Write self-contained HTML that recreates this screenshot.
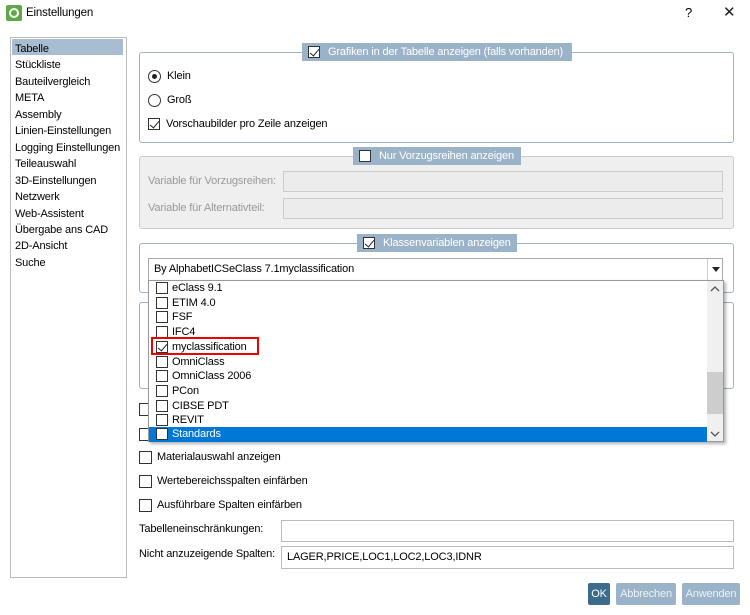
<!DOCTYPE html>
<html><head><meta charset="utf-8"><style>
*{box-sizing:border-box;margin:0;padding:0}
body{width:750px;height:615px;background:#fff;font-family:"Liberation Sans",sans-serif;font-size:11px;letter-spacing:-0.15px;color:#000;position:relative;overflow:hidden}
.a{position:absolute;white-space:nowrap}
span{white-space:nowrap}
.cb{position:absolute;width:13px;height:13px;border:1px solid #333;background:#fff}
.ck::after{content:"";position:absolute;left:3px;top:0px;width:4px;height:8px;border:solid #222;border-width:0 1.3px 1.3px 0;transform:rotate(40deg)}
.grp{position:absolute;border:1px solid #9cb3c8;border-radius:3px}
.hdr{position:absolute;background:#9bb3c9;color:#fff;height:18px;line-height:18px}
.inp{position:absolute;border:1px solid #bbb;background:#fff}
.row{position:absolute;left:0;height:15px;line-height:15px;width:558px}
.row .cb{left:7px;top:1px;width:12px;height:12px}
.row span{position:absolute;left:23px;top:0}
.btn{position:absolute;height:22px;line-height:22px;text-align:center;border-radius:2px;color:#eef3f7;background:#9ab3c8}
</style></head><body>
<div class="a" style="left:6px;top:5px;width:16px;height:16px;background:#5fa845;border-radius:2px"></div>
<div class="a" style="left:9px;top:8px;width:10px;height:10px;border:2px solid #fff;border-radius:50%"></div>
<div class="a" style="left:26px;top:7px;font-size:11.5px">Einstellungen</div>
<div class="a" style="left:685px;top:5px;font-size:13px">?</div>
<div class="a" style="left:723px;top:3px;font-size:15px;font-weight:normal;color:#222">✕</div>
<div class="a" style="left:10px;top:37px;width:117px;height:541px;border:1px solid #bbb"></div>
<div class="a" style="left:12px;top:39px;width:111px;height:16px;background:#a9bdd0"></div>
<div class="a" style="left:15px;top:41px;line-height:16.46px">Tabelle<br>Stückliste<br>Bauteilvergleich<br>META<br>Assembly<br>Linien-Einstellungen<br>Logging Einstellungen<br>Teileauswahl<br>3D-Einstellungen<br>Netzwerk<br>Web-Assistent<br>Übergabe ans CAD<br>2D-Ansicht<br>Suche</div>
<div class="grp" style="left:139px;top:52px;width:595px;height:91px"></div>
<div class="hdr" style="left:302px;top:43px;width:270px"><div class="cb ck" style="left:6px;top:3px;width:12px;height:12px"></div><span style="position:absolute;left:26px">Grafiken in der Tabelle anzeigen (falls vorhanden)</span></div>
<div class="a" style="left:148px;top:70px;width:13px;height:13px;border:1px solid #333;border-radius:50%"></div>
<div class="a" style="left:152px;top:74px;width:5px;height:5px;background:#222;border-radius:50%"></div>
<div class="a" style="left:167px;top:70px">Klein</div>
<div class="a" style="left:148px;top:94px;width:13px;height:13px;border:1px solid #333;border-radius:50%"></div>
<div class="a" style="left:167px;top:94px">Groß</div>
<div class="cb ck" style="left:148px;top:118px;width:12px;height:12px"></div>
<div class="a" style="left:166px;top:118px">Vorschaubilder pro Zeile anzeigen</div>
<div class="grp" style="left:139px;top:156px;width:595px;height:73px;background:#efefef;border-color:#ccc"></div>
<div class="hdr" style="left:353px;top:147px;width:168px"><div class="cb" style="left:6px;top:3px;width:12px;height:12px"></div><span style="position:absolute;left:26px">Nur Vorzugsreihen anzeigen</span></div>
<div class="a" style="left:148px;top:175px;color:#999">Variable für Vorzugsreihen:</div>
<div class="inp" style="left:283px;top:171px;width:440px;height:21px;background:#ececec;border-color:#ccc"></div>
<div class="a" style="left:148px;top:202px;color:#999">Variable für Alternativteil:</div>
<div class="inp" style="left:283px;top:198px;width:440px;height:21px;background:#ececec;border-color:#ccc"></div>
<div class="grp" style="left:139px;top:243px;width:595px;height:50px"></div>
<div class="hdr" style="left:357px;top:234px;width:160px"><div class="cb ck" style="left:6px;top:3px;width:12px;height:12px"></div><span style="position:absolute;left:26px">Klassenvariablen anzeigen</span></div>
<div class="inp" style="left:148px;top:258px;width:575px;height:23px;border-color:#aaa"></div>
<div class="a" style="left:154px;top:263px">By AlphabetICSeClass 7.1myclassification</div>
<div class="a" style="left:707px;top:259px;width:1px;height:21px;background:#ccc"></div>
<div class="a" style="left:712px;top:267px;width:0;height:0;border:4px solid transparent;border-top:5px solid #222"></div>
<div class="grp" style="left:139px;top:302px;width:595px;height:87px"></div>
<div class="cb" style="left:139px;top:403px"></div>
<div class="cb" style="left:139px;top:428px"></div>
<div class="a" style="left:148px;top:280px;width:576px;height:162px;background:#fff;border:1px solid #999;box-shadow:2px 2px 3px rgba(0,0,0,.3)">
 <div class="row" style="top:0px"><div class="cb"></div><span>eClass 9.1</span></div>
 <div class="row" style="top:14.7px"><div class="cb"></div><span>ETIM 4.0</span></div>
 <div class="row" style="top:29.4px"><div class="cb"></div><span>FSF</span></div>
 <div class="row" style="top:44.1px"><div class="cb"></div><span>IFC4</span></div>
 <div class="row" style="top:58.8px"><div class="cb ck"></div><span>myclassification</span></div>
 <div class="row" style="top:73.5px"><div class="cb"></div><span>OmniClass</span></div>
 <div class="row" style="top:88.2px"><div class="cb"></div><span>OmniClass 2006</span></div>
 <div class="row" style="top:102.9px"><div class="cb"></div><span>PCon</span></div>
 <div class="row" style="top:117.6px"><div class="cb"></div><span>CIBSE PDT</span></div>
 <div class="row" style="top:132.3px"><div class="cb"></div><span>REVIT</span></div>
 <div class="row" style="top:146px;background:#0078d7;color:#fff"><div class="cb"></div><span>Standards</span></div>
 <div class="a" style="left:558px;top:0;width:16px;height:160px;background:#f0f0f0"></div>
 <div class="a" style="left:558px;top:91px;width:16px;height:42px;background:#cdcdcd"></div>
 <svg class="a" style="left:561px;top:4px" width="10" height="8"><path d="M1 6 L5 2 L9 6" fill="none" stroke="#555" stroke-width="1.3"/></svg>
 <svg class="a" style="left:561px;top:149px" width="10" height="8"><path d="M1 2 L5 6 L9 2" fill="none" stroke="#555" stroke-width="1.3"/></svg>
</div>
<div class="a" style="left:151px;top:337px;width:108px;height:18px;border:2px solid #e00"></div>
<div class="cb" style="left:139px;top:451px"></div>
<div class="a" style="left:157px;top:451px">Materialauswahl anzeigen</div>
<div class="cb" style="left:139px;top:475px"></div>
<div class="a" style="left:157px;top:475px">Wertebereichsspalten einfärben</div>
<div class="cb" style="left:139px;top:499px"></div>
<div class="a" style="left:157px;top:499px">Ausführbare Spalten einfärben</div>
<div class="a" style="left:139px;top:523px">Tabelleneinschränkungen:</div>
<div class="inp" style="left:281px;top:520px;width:453px;height:22px"></div>
<div class="a" style="left:139px;top:548px">Nicht anzuzeigende Spalten:</div>
<div class="inp" style="left:281px;top:546px;width:453px;height:23px"></div>
<div class="a" style="left:287px;top:551px">LAGER,PRICE,LOC1,LOC2,LOC3,IDNR</div>
<div class="btn" style="left:588px;top:583px;width:22px;background:#3c6b8c;color:#fff">OK</div>
<div class="btn" style="left:616px;top:583px;width:60px">Abbrechen</div>
<div class="btn" style="left:682px;top:583px;width:58px">Anwenden</div>
</body></html>
